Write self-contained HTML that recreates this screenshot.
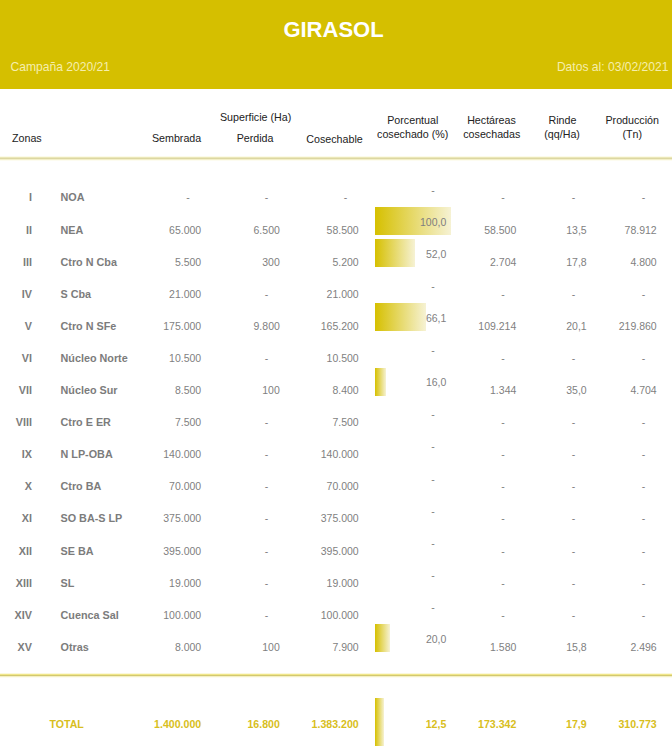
<!DOCTYPE html>
<html><head><meta charset="utf-8"><style>
html,body{margin:0;padding:0;background:#fff;width:672px;height:746px;overflow:hidden;position:relative}
.t{position:absolute;font-family:"Liberation Sans",sans-serif;white-space:nowrap}
.hdr{position:absolute;left:0;top:0;width:672px;background:#d5bf00}
.title{color:#fff;font-weight:bold}
.sub{color:#f6eeac}
.h{color:#222222}
.rom{color:#7c7c7c;font-weight:bold}
.nm{color:#7c7c7c;font-weight:bold}
.num{color:#7f7f7f}
.tot{color:#d8be20;font-weight:bold}
.ln{position:absolute;left:0;width:672px;height:1px}
.bar{position:absolute;background:linear-gradient(to right,#d6c000,#f6f2d4)}
</style></head><body>
<div class="hdr" style="height:88.5px"></div>
<div class="t title" style="left:233.5px;width:200px;top:17.00px;font-size:22px;line-height:25px;text-align:center">GIRASOL</div>
<div class="t sub" style="left:10.5px;top:59.50px;font-size:12.1px;line-height:14px">Campaña 2020/21</div>
<div class="t sub" style="right:3.5px;top:59.50px;font-size:12.1px;line-height:14px;text-align:right">Datos al: 03/02/2021</div>
<div class="t h" style="left:12px;top:132.40px;font-size:10.7px;line-height:12px">Zonas</div>
<div class="t h" style="left:76.6px;width:200px;top:132.40px;font-size:10.7px;line-height:12px;text-align:center">Sembrada</div>
<div class="t h" style="left:155.6px;width:200px;top:110.60px;font-size:10.7px;line-height:12px;text-align:center">Superficie (Ha)</div>
<div class="t h" style="left:155.1px;width:200px;top:132.40px;font-size:10.7px;line-height:12px;text-align:center">Perdida</div>
<div class="t h" style="left:234.5px;width:200px;top:132.80px;font-size:10.7px;line-height:12px;text-align:center">Cosechable</div>
<div class="t h" style="left:312.8px;width:200px;top:113.60px;font-size:10.7px;line-height:12px;text-align:center">Porcentual</div>
<div class="t h" style="left:312.7px;width:200px;top:127.60px;font-size:10.7px;line-height:12px;text-align:center">cosechado (%)</div>
<div class="t h" style="left:391.5px;width:200px;top:113.60px;font-size:10.7px;line-height:12px;text-align:center">Hectáreas</div>
<div class="t h" style="left:391.8px;width:200px;top:127.60px;font-size:10.7px;line-height:12px;text-align:center">cosechadas</div>
<div class="t h" style="left:462.4px;width:200px;top:113.60px;font-size:10.7px;line-height:12px;text-align:center">Rinde</div>
<div class="t h" style="left:462.1px;width:200px;top:127.60px;font-size:10.7px;line-height:12px;text-align:center">(qq/Ha)</div>
<div class="t h" style="left:532.2px;width:200px;top:113.60px;font-size:10.7px;line-height:12px;text-align:center">Producción</div>
<div class="t h" style="left:532.2px;width:200px;top:127.60px;font-size:10.7px;line-height:12px;text-align:center">(Tn)</div>
<div class="ln" style="top:156px;background:#fcfbea"></div>
<div class="ln" style="top:157px;background:#ebe7b8"></div>
<div class="ln" style="top:158px;background:#dcd7a2"></div>
<div class="ln" style="top:159px;background:#f3efc8"></div>
<div class="ln" style="top:160px;background:#fdfcf0"></div>
<div class="ln" style="top:673px;background:#fbf8dc"></div>
<div class="ln" style="top:674px;background:#f0e688"></div>
<div class="ln" style="top:675px;background:#d2c870"></div>
<div class="ln" style="top:676px;background:#f4efc4"></div>
<div class="ln" style="top:677px;background:#fdfcf0"></div>
<div class="t rom" style="right:640px;top:191.40px;font-size:10.8px;line-height:12px;text-align:right">I</div>
<div class="t nm" style="left:60.5px;top:191.40px;font-size:10.8px;line-height:12px">NOA</div>
<div class="t num" style="right:482.3px;top:191.40px;font-size:10.5px;line-height:12px;text-align:right">-</div>
<div class="t num" style="right:403.7px;top:191.40px;font-size:10.5px;line-height:12px;text-align:right">-</div>
<div class="t num" style="right:324.8px;top:191.40px;font-size:10.5px;line-height:12px;text-align:right">-</div>
<div class="t num" style="right:237.2px;top:183.60px;font-size:10.5px;line-height:12px;text-align:right">-</div>
<div class="t num" style="right:167.20000000000005px;top:191.40px;font-size:10.5px;line-height:12px;text-align:right">-</div>
<div class="t num" style="right:96.79999999999995px;top:191.40px;font-size:10.5px;line-height:12px;text-align:right">-</div>
<div class="t num" style="right:26.799999999999955px;top:191.40px;font-size:10.5px;line-height:12px;text-align:right">-</div>
<div class="t rom" style="right:640px;top:223.50px;font-size:10.8px;line-height:12px;text-align:right">II</div>
<div class="t nm" style="left:60.5px;top:223.50px;font-size:10.8px;line-height:12px">NEA</div>
<div class="t num" style="right:470.8px;top:223.50px;font-size:10.5px;line-height:12px;text-align:right">65.000</div>
<div class="t num" style="right:392.2px;top:223.50px;font-size:10.5px;line-height:12px;text-align:right">6.500</div>
<div class="t num" style="right:313.3px;top:223.50px;font-size:10.5px;line-height:12px;text-align:right">58.500</div>
<div class="bar" style="left:375px;top:207.00px;width:76.00px;height:28px"></div>
<div class="t num" style="right:225.7px;top:215.70px;font-size:10.5px;line-height:12px;text-align:right">100,0</div>
<div class="t num" style="right:155.70000000000005px;top:223.50px;font-size:10.5px;line-height:12px;text-align:right">58.500</div>
<div class="t num" style="right:85.29999999999995px;top:223.50px;font-size:10.5px;line-height:12px;text-align:right">13,5</div>
<div class="t num" style="right:15.299999999999955px;top:223.50px;font-size:10.5px;line-height:12px;text-align:right">78.912</div>
<div class="t rom" style="right:640px;top:255.60px;font-size:10.8px;line-height:12px;text-align:right">III</div>
<div class="t nm" style="left:60.5px;top:255.60px;font-size:10.8px;line-height:12px">Ctro N Cba</div>
<div class="t num" style="right:470.8px;top:255.60px;font-size:10.5px;line-height:12px;text-align:right">5.500</div>
<div class="t num" style="right:392.2px;top:255.60px;font-size:10.5px;line-height:12px;text-align:right">300</div>
<div class="t num" style="right:313.3px;top:255.60px;font-size:10.5px;line-height:12px;text-align:right">5.200</div>
<div class="bar" style="left:375px;top:239.10px;width:39.50px;height:28px"></div>
<div class="t num" style="right:225.7px;top:247.80px;font-size:10.5px;line-height:12px;text-align:right">52,0</div>
<div class="t num" style="right:155.70000000000005px;top:255.60px;font-size:10.5px;line-height:12px;text-align:right">2.704</div>
<div class="t num" style="right:85.29999999999995px;top:255.60px;font-size:10.5px;line-height:12px;text-align:right">17,8</div>
<div class="t num" style="right:15.299999999999955px;top:255.60px;font-size:10.5px;line-height:12px;text-align:right">4.800</div>
<div class="t rom" style="right:640px;top:287.70px;font-size:10.8px;line-height:12px;text-align:right">IV</div>
<div class="t nm" style="left:60.5px;top:287.70px;font-size:10.8px;line-height:12px">S Cba</div>
<div class="t num" style="right:470.8px;top:287.70px;font-size:10.5px;line-height:12px;text-align:right">21.000</div>
<div class="t num" style="right:403.7px;top:287.70px;font-size:10.5px;line-height:12px;text-align:right">-</div>
<div class="t num" style="right:313.3px;top:287.70px;font-size:10.5px;line-height:12px;text-align:right">21.000</div>
<div class="t num" style="right:237.2px;top:279.90px;font-size:10.5px;line-height:12px;text-align:right">-</div>
<div class="t num" style="right:167.20000000000005px;top:287.70px;font-size:10.5px;line-height:12px;text-align:right">-</div>
<div class="t num" style="right:96.79999999999995px;top:287.70px;font-size:10.5px;line-height:12px;text-align:right">-</div>
<div class="t num" style="right:26.799999999999955px;top:287.70px;font-size:10.5px;line-height:12px;text-align:right">-</div>
<div class="t rom" style="right:640px;top:319.80px;font-size:10.8px;line-height:12px;text-align:right">V</div>
<div class="t nm" style="left:60.5px;top:319.80px;font-size:10.8px;line-height:12px">Ctro N SFe</div>
<div class="t num" style="right:470.8px;top:319.80px;font-size:10.5px;line-height:12px;text-align:right">175.000</div>
<div class="t num" style="right:392.2px;top:319.80px;font-size:10.5px;line-height:12px;text-align:right">9.800</div>
<div class="t num" style="right:313.3px;top:319.80px;font-size:10.5px;line-height:12px;text-align:right">165.200</div>
<div class="bar" style="left:375px;top:303.30px;width:50.50px;height:28px"></div>
<div class="t num" style="right:225.7px;top:312.00px;font-size:10.5px;line-height:12px;text-align:right">66,1</div>
<div class="t num" style="right:155.70000000000005px;top:319.80px;font-size:10.5px;line-height:12px;text-align:right">109.214</div>
<div class="t num" style="right:85.29999999999995px;top:319.80px;font-size:10.5px;line-height:12px;text-align:right">20,1</div>
<div class="t num" style="right:15.299999999999955px;top:319.80px;font-size:10.5px;line-height:12px;text-align:right">219.860</div>
<div class="t rom" style="right:640px;top:351.90px;font-size:10.8px;line-height:12px;text-align:right">VI</div>
<div class="t nm" style="left:60.5px;top:351.90px;font-size:10.8px;line-height:12px">Núcleo Norte</div>
<div class="t num" style="right:470.8px;top:351.90px;font-size:10.5px;line-height:12px;text-align:right">10.500</div>
<div class="t num" style="right:403.7px;top:351.90px;font-size:10.5px;line-height:12px;text-align:right">-</div>
<div class="t num" style="right:313.3px;top:351.90px;font-size:10.5px;line-height:12px;text-align:right">10.500</div>
<div class="t num" style="right:237.2px;top:344.10px;font-size:10.5px;line-height:12px;text-align:right">-</div>
<div class="t num" style="right:167.20000000000005px;top:351.90px;font-size:10.5px;line-height:12px;text-align:right">-</div>
<div class="t num" style="right:96.79999999999995px;top:351.90px;font-size:10.5px;line-height:12px;text-align:right">-</div>
<div class="t num" style="right:26.799999999999955px;top:351.90px;font-size:10.5px;line-height:12px;text-align:right">-</div>
<div class="t rom" style="right:640px;top:384.00px;font-size:10.8px;line-height:12px;text-align:right">VII</div>
<div class="t nm" style="left:60.5px;top:384.00px;font-size:10.8px;line-height:12px">Núcleo Sur</div>
<div class="t num" style="right:470.8px;top:384.00px;font-size:10.5px;line-height:12px;text-align:right">8.500</div>
<div class="t num" style="right:392.2px;top:384.00px;font-size:10.5px;line-height:12px;text-align:right">100</div>
<div class="t num" style="right:313.3px;top:384.00px;font-size:10.5px;line-height:12px;text-align:right">8.400</div>
<div class="bar" style="left:375px;top:367.50px;width:11.00px;height:28px"></div>
<div class="t num" style="right:225.7px;top:376.20px;font-size:10.5px;line-height:12px;text-align:right">16,0</div>
<div class="t num" style="right:155.70000000000005px;top:384.00px;font-size:10.5px;line-height:12px;text-align:right">1.344</div>
<div class="t num" style="right:85.29999999999995px;top:384.00px;font-size:10.5px;line-height:12px;text-align:right">35,0</div>
<div class="t num" style="right:15.299999999999955px;top:384.00px;font-size:10.5px;line-height:12px;text-align:right">4.704</div>
<div class="t rom" style="right:640px;top:416.10px;font-size:10.8px;line-height:12px;text-align:right">VIII</div>
<div class="t nm" style="left:60.5px;top:416.10px;font-size:10.8px;line-height:12px">Ctro E ER</div>
<div class="t num" style="right:470.8px;top:416.10px;font-size:10.5px;line-height:12px;text-align:right">7.500</div>
<div class="t num" style="right:403.7px;top:416.10px;font-size:10.5px;line-height:12px;text-align:right">-</div>
<div class="t num" style="right:313.3px;top:416.10px;font-size:10.5px;line-height:12px;text-align:right">7.500</div>
<div class="t num" style="right:237.2px;top:408.30px;font-size:10.5px;line-height:12px;text-align:right">-</div>
<div class="t num" style="right:167.20000000000005px;top:416.10px;font-size:10.5px;line-height:12px;text-align:right">-</div>
<div class="t num" style="right:96.79999999999995px;top:416.10px;font-size:10.5px;line-height:12px;text-align:right">-</div>
<div class="t num" style="right:26.799999999999955px;top:416.10px;font-size:10.5px;line-height:12px;text-align:right">-</div>
<div class="t rom" style="right:640px;top:448.20px;font-size:10.8px;line-height:12px;text-align:right">IX</div>
<div class="t nm" style="left:60.5px;top:448.20px;font-size:10.8px;line-height:12px">N LP-OBA</div>
<div class="t num" style="right:470.8px;top:448.20px;font-size:10.5px;line-height:12px;text-align:right">140.000</div>
<div class="t num" style="right:403.7px;top:448.20px;font-size:10.5px;line-height:12px;text-align:right">-</div>
<div class="t num" style="right:313.3px;top:448.20px;font-size:10.5px;line-height:12px;text-align:right">140.000</div>
<div class="t num" style="right:237.2px;top:440.40px;font-size:10.5px;line-height:12px;text-align:right">-</div>
<div class="t num" style="right:167.20000000000005px;top:448.20px;font-size:10.5px;line-height:12px;text-align:right">-</div>
<div class="t num" style="right:96.79999999999995px;top:448.20px;font-size:10.5px;line-height:12px;text-align:right">-</div>
<div class="t num" style="right:26.799999999999955px;top:448.20px;font-size:10.5px;line-height:12px;text-align:right">-</div>
<div class="t rom" style="right:640px;top:480.30px;font-size:10.8px;line-height:12px;text-align:right">X</div>
<div class="t nm" style="left:60.5px;top:480.30px;font-size:10.8px;line-height:12px">Ctro BA</div>
<div class="t num" style="right:470.8px;top:480.30px;font-size:10.5px;line-height:12px;text-align:right">70.000</div>
<div class="t num" style="right:403.7px;top:480.30px;font-size:10.5px;line-height:12px;text-align:right">-</div>
<div class="t num" style="right:313.3px;top:480.30px;font-size:10.5px;line-height:12px;text-align:right">70.000</div>
<div class="t num" style="right:237.2px;top:472.50px;font-size:10.5px;line-height:12px;text-align:right">-</div>
<div class="t num" style="right:167.20000000000005px;top:480.30px;font-size:10.5px;line-height:12px;text-align:right">-</div>
<div class="t num" style="right:96.79999999999995px;top:480.30px;font-size:10.5px;line-height:12px;text-align:right">-</div>
<div class="t num" style="right:26.799999999999955px;top:480.30px;font-size:10.5px;line-height:12px;text-align:right">-</div>
<div class="t rom" style="right:640px;top:512.40px;font-size:10.8px;line-height:12px;text-align:right">XI</div>
<div class="t nm" style="left:60.5px;top:512.40px;font-size:10.8px;line-height:12px">SO BA-S LP</div>
<div class="t num" style="right:470.8px;top:512.40px;font-size:10.5px;line-height:12px;text-align:right">375.000</div>
<div class="t num" style="right:403.7px;top:512.40px;font-size:10.5px;line-height:12px;text-align:right">-</div>
<div class="t num" style="right:313.3px;top:512.40px;font-size:10.5px;line-height:12px;text-align:right">375.000</div>
<div class="t num" style="right:237.2px;top:504.60px;font-size:10.5px;line-height:12px;text-align:right">-</div>
<div class="t num" style="right:167.20000000000005px;top:512.40px;font-size:10.5px;line-height:12px;text-align:right">-</div>
<div class="t num" style="right:96.79999999999995px;top:512.40px;font-size:10.5px;line-height:12px;text-align:right">-</div>
<div class="t num" style="right:26.799999999999955px;top:512.40px;font-size:10.5px;line-height:12px;text-align:right">-</div>
<div class="t rom" style="right:640px;top:544.50px;font-size:10.8px;line-height:12px;text-align:right">XII</div>
<div class="t nm" style="left:60.5px;top:544.50px;font-size:10.8px;line-height:12px">SE BA</div>
<div class="t num" style="right:470.8px;top:544.50px;font-size:10.5px;line-height:12px;text-align:right">395.000</div>
<div class="t num" style="right:403.7px;top:544.50px;font-size:10.5px;line-height:12px;text-align:right">-</div>
<div class="t num" style="right:313.3px;top:544.50px;font-size:10.5px;line-height:12px;text-align:right">395.000</div>
<div class="t num" style="right:237.2px;top:536.70px;font-size:10.5px;line-height:12px;text-align:right">-</div>
<div class="t num" style="right:167.20000000000005px;top:544.50px;font-size:10.5px;line-height:12px;text-align:right">-</div>
<div class="t num" style="right:96.79999999999995px;top:544.50px;font-size:10.5px;line-height:12px;text-align:right">-</div>
<div class="t num" style="right:26.799999999999955px;top:544.50px;font-size:10.5px;line-height:12px;text-align:right">-</div>
<div class="t rom" style="right:640px;top:576.60px;font-size:10.8px;line-height:12px;text-align:right">XIII</div>
<div class="t nm" style="left:60.5px;top:576.60px;font-size:10.8px;line-height:12px">SL</div>
<div class="t num" style="right:470.8px;top:576.60px;font-size:10.5px;line-height:12px;text-align:right">19.000</div>
<div class="t num" style="right:403.7px;top:576.60px;font-size:10.5px;line-height:12px;text-align:right">-</div>
<div class="t num" style="right:313.3px;top:576.60px;font-size:10.5px;line-height:12px;text-align:right">19.000</div>
<div class="t num" style="right:237.2px;top:568.80px;font-size:10.5px;line-height:12px;text-align:right">-</div>
<div class="t num" style="right:167.20000000000005px;top:576.60px;font-size:10.5px;line-height:12px;text-align:right">-</div>
<div class="t num" style="right:96.79999999999995px;top:576.60px;font-size:10.5px;line-height:12px;text-align:right">-</div>
<div class="t num" style="right:26.799999999999955px;top:576.60px;font-size:10.5px;line-height:12px;text-align:right">-</div>
<div class="t rom" style="right:640px;top:608.70px;font-size:10.8px;line-height:12px;text-align:right">XIV</div>
<div class="t nm" style="left:60.5px;top:608.70px;font-size:10.8px;line-height:12px">Cuenca Sal</div>
<div class="t num" style="right:470.8px;top:608.70px;font-size:10.5px;line-height:12px;text-align:right">100.000</div>
<div class="t num" style="right:403.7px;top:608.70px;font-size:10.5px;line-height:12px;text-align:right">-</div>
<div class="t num" style="right:313.3px;top:608.70px;font-size:10.5px;line-height:12px;text-align:right">100.000</div>
<div class="t num" style="right:237.2px;top:600.90px;font-size:10.5px;line-height:12px;text-align:right">-</div>
<div class="t num" style="right:167.20000000000005px;top:608.70px;font-size:10.5px;line-height:12px;text-align:right">-</div>
<div class="t num" style="right:96.79999999999995px;top:608.70px;font-size:10.5px;line-height:12px;text-align:right">-</div>
<div class="t num" style="right:26.799999999999955px;top:608.70px;font-size:10.5px;line-height:12px;text-align:right">-</div>
<div class="t rom" style="right:640px;top:640.80px;font-size:10.8px;line-height:12px;text-align:right">XV</div>
<div class="t nm" style="left:60.5px;top:640.80px;font-size:10.8px;line-height:12px">Otras</div>
<div class="t num" style="right:470.8px;top:640.80px;font-size:10.5px;line-height:12px;text-align:right">8.000</div>
<div class="t num" style="right:392.2px;top:640.80px;font-size:10.5px;line-height:12px;text-align:right">100</div>
<div class="t num" style="right:313.3px;top:640.80px;font-size:10.5px;line-height:12px;text-align:right">7.900</div>
<div class="bar" style="left:375px;top:624.30px;width:15.00px;height:28px"></div>
<div class="t num" style="right:225.7px;top:633.00px;font-size:10.5px;line-height:12px;text-align:right">20,0</div>
<div class="t num" style="right:155.70000000000005px;top:640.80px;font-size:10.5px;line-height:12px;text-align:right">1.580</div>
<div class="t num" style="right:85.29999999999995px;top:640.80px;font-size:10.5px;line-height:12px;text-align:right">15,8</div>
<div class="t num" style="right:15.299999999999955px;top:640.80px;font-size:10.5px;line-height:12px;text-align:right">2.496</div>
<div class="t tot" style="left:49.5px;top:717.70px;font-size:10.6px;line-height:12px">TOTAL</div>
<div class="t tot" style="right:470.8px;top:717.70px;font-size:10.6px;line-height:12px;text-align:right">1.400.000</div>
<div class="t tot" style="right:392.2px;top:717.70px;font-size:10.6px;line-height:12px;text-align:right">16.800</div>
<div class="t tot" style="right:313.3px;top:717.70px;font-size:10.6px;line-height:12px;text-align:right">1.383.200</div>
<div class="t tot" style="right:225.7px;top:717.70px;font-size:10.6px;line-height:12px;text-align:right">12,5</div>
<div class="t tot" style="right:155.70000000000005px;top:717.70px;font-size:10.6px;line-height:12px;text-align:right">173.342</div>
<div class="t tot" style="right:85.29999999999995px;top:717.70px;font-size:10.6px;line-height:12px;text-align:right">17,9</div>
<div class="t tot" style="right:15.299999999999955px;top:717.70px;font-size:10.6px;line-height:12px;text-align:right">310.773</div>
<div class="bar" style="left:375px;top:697.5px;width:9.2px;height:48.5px"></div>
</body></html>
